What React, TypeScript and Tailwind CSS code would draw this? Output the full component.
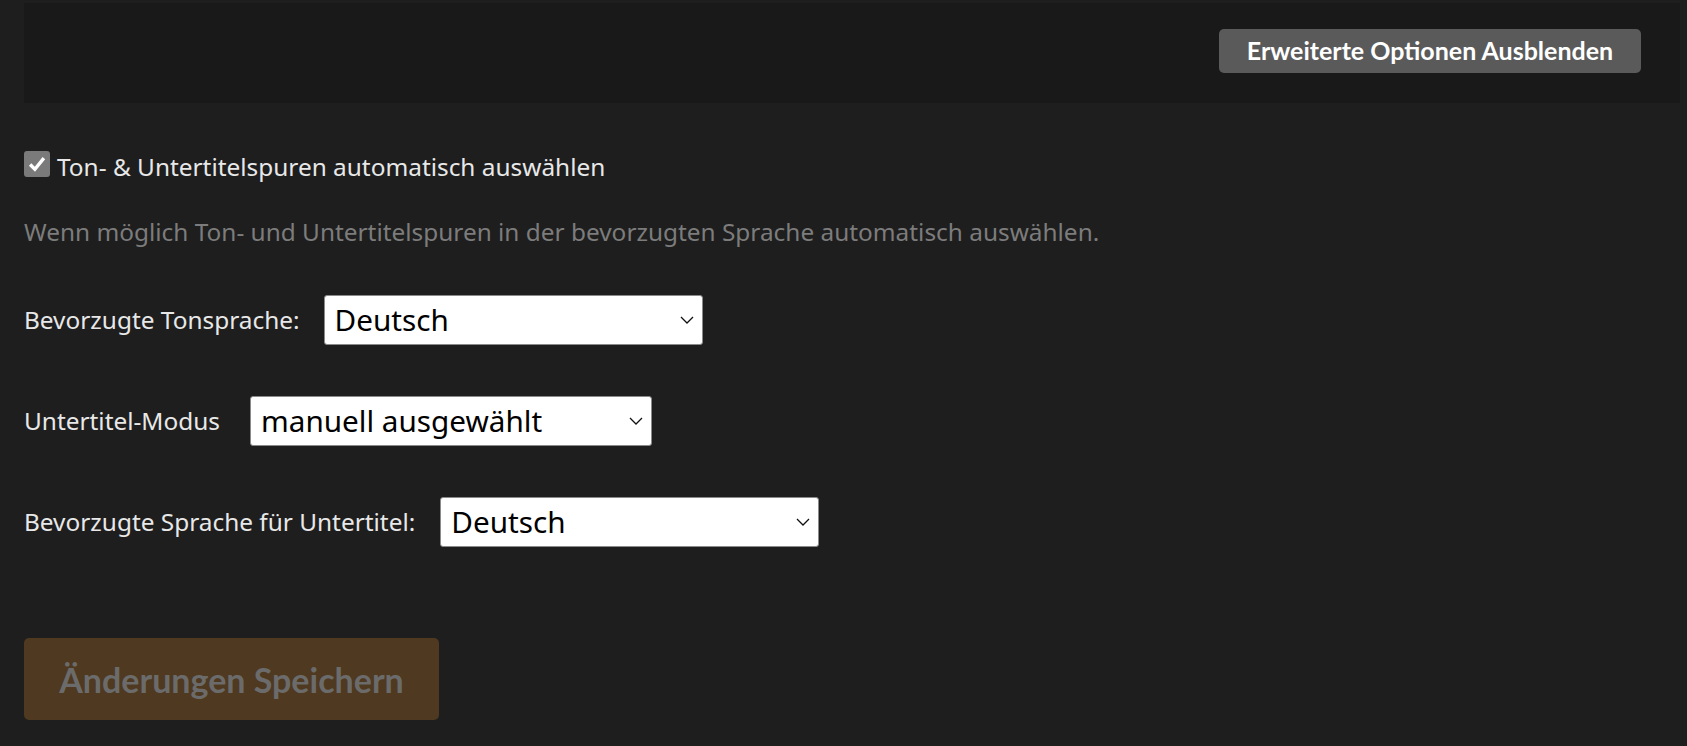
import { useState } from "react";

const bodyFont = { fontFamily: '"Noto Sans", "Open Sans", sans-serif' };

const Chevron = () => (
  <svg
    width="14"
    height="9"
    viewBox="0 0 14 9"
    fill="none"
    className="pointer-events-none absolute right-[9px] top-1/2 -translate-y-1/2"
  >
    <path d="M1 1.5 L7 7.5 L13 1.5" stroke="#111" strokeWidth="1.3" />
  </svg>
);

const LangSelect = ({
  value,
  options,
  width,
}: {
  value: string;
  options: string[];
  width: string;
}) => {
  const [v, setV] = useState(value);
  return (
    <div className={`relative ${width}`}>
      <select
        value={v}
        onChange={(e) => setV(e.target.value)}
        style={bodyFont}
        className="h-[50px] w-full appearance-none rounded-[3px] border border-[#8a8a8a] bg-white pl-[10px] pr-8 text-[29.7px] text-black outline-none"
      >
        {options.map((o) => (
          <option key={o}>{o}</option>
        ))}
      </select>
      <Chevron />
    </div>
  );
};

const App = () => {
  const [auto, setAuto] = useState(true);

  return (
    <div className="min-h-[746px] bg-[#1e1e1e] pl-[24px] pr-[7px] pt-[3px]" style={bodyFont}>
      {/* Advanced options bar */}
      <div className="flex h-[100px] items-center justify-end bg-[#191919] pr-[39px]">
        <button className="-mt-[4px] h-[44px] w-[422px] rounded-[5px] bg-[#5a5a5a] font-['Lato'] text-[25px] font-bold text-white">
          Erweiterte Optionen Ausblenden
        </button>
      </div>

      {/* Auto select */}
      <label className="mt-[46px] flex h-[36px] cursor-pointer items-center gap-[7px]">
        <span
          onClick={() => setAuto(!auto)}
          className="-mt-[6px] flex h-[26px] w-[26px] items-center justify-center rounded-[3px] bg-[#7a7a7a]"
        >
          {auto && (
            <svg width="18" height="16" viewBox="0 0 17 15" fill="none">
              <path d="M2 8 L6.5 12.5 L15 2" stroke="white" strokeWidth="3.2" />
            </svg>
          )}
        </span>
        <span className="text-[24.4px] leading-[36px] text-[#e8e8e8]">
          Ton- &amp; Untertitelspuren automatisch auswählen
        </span>
      </label>

      <p className="mt-[29px] text-[24.4px] leading-[36px] text-[#7c7c7c]">
        Wenn möglich Ton- und Untertitelspuren in der bevorzugten Sprache automatisch auswählen.
      </p>

      {/* Language options */}
      <div className="mt-[45px] flex flex-col gap-[51px]">
        <div className="flex items-center gap-[24px]">
          <span className="text-[24.4px] text-[#e8e8e8]">Bevorzugte Tonsprache:</span>
          <LangSelect value="Deutsch" options={["Deutsch", "English", "Français"]} width="w-[379px]" />
        </div>
        <div className="flex items-center gap-[30px]">
          <span className="text-[24.4px] text-[#e8e8e8]">Untertitel-Modus</span>
          <LangSelect
            value="manuell ausgewählt"
            options={["manuell ausgewählt", "automatisch", "immer an", "aus"]}
            width="w-[402px]"
          />
        </div>
        <div className="flex items-center gap-[25px]">
          <span className="text-[24.4px] text-[#e8e8e8]">Bevorzugte Sprache für Untertitel:</span>
          <LangSelect value="Deutsch" options={["Deutsch", "English", "Français"]} width="w-[379px]" />
        </div>
      </div>

      {/* Save */}
      <button
        disabled
        className="mt-[91px] h-[82px] w-[415px] rounded-[5px] bg-[#4f3920] font-['Lato'] text-[34px] font-bold text-[#6b6b6b]"
      >
        Änderungen Speichern
      </button>
    </div>
  );
};

export default App;
